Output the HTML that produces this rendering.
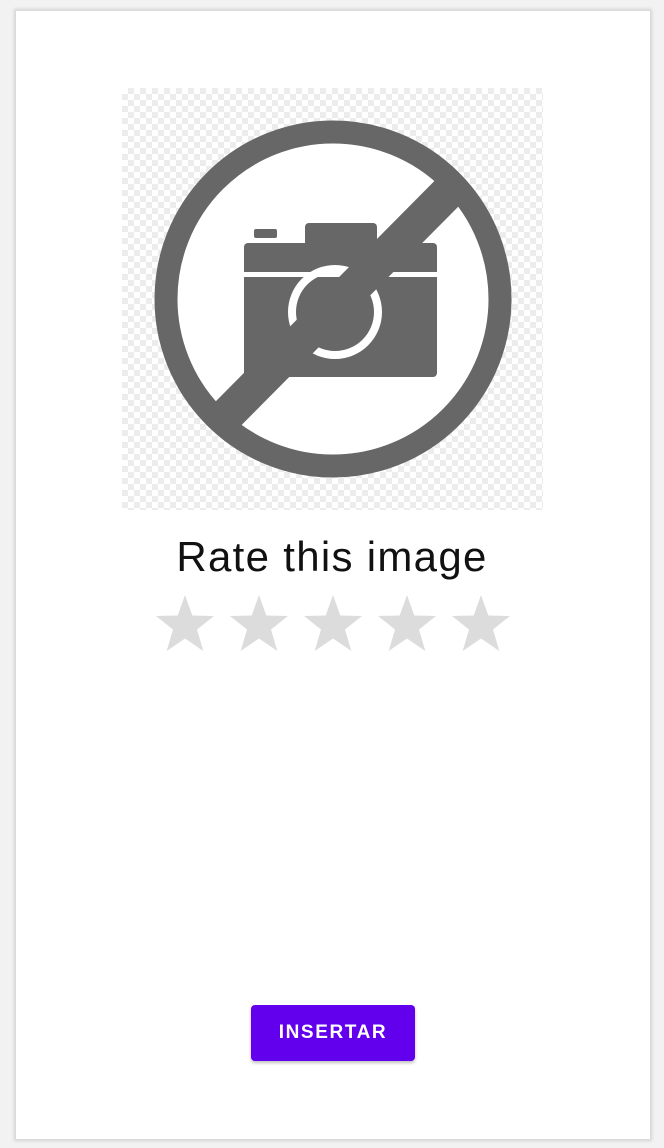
<!DOCTYPE html>
<html><head><meta charset="utf-8"><style>
html,body{margin:0;padding:0;background:#f2f2f2;width:664px;height:1148px;overflow:hidden;font-family:"Liberation Sans",sans-serif}
.card{position:absolute;left:16px;top:11px;width:634px;height:1128px;background:#fff;box-shadow:0 0 3px 2px #d4d4d4}
.img{position:absolute;left:122px;top:88px;width:421px;height:422px;
background-color:#fff;background-image:linear-gradient(45deg,#ececec 25%,transparent 25%,transparent 75%,#ececec 75%),linear-gradient(45deg,#ececec 25%,transparent 25%,transparent 75%,#ececec 75%);background-size:12px 12px;background-position:0 0,6px 6px}
.title{position:absolute;left:0;width:664px;top:533px;text-align:center;font-size:42px;letter-spacing:1.3px;color:#111}
.btn{position:absolute;left:251px;top:1005px;width:164px;height:56px;background:#6200ee;border-radius:4px;box-shadow:0 2px 3px rgba(0,0,0,.25);color:#fff;font-size:19px;font-weight:bold;letter-spacing:1.6px;text-align:center;line-height:56px}
</style></head><body>
<div class="card"></div>
<div class="img"></div>
<svg style="position:absolute;left:0;top:0" width="664" height="1148">
<defs><clipPath id="c"><circle cx="333" cy="299" r="156"/></clipPath></defs>
<circle cx="333" cy="299" r="167" fill="#fff" stroke="#676767" stroke-width="23"/>
<g clip-path="url(#c)">
<rect x="244" y="243" width="193" height="134" rx="4" fill="#676767"/>
<rect x="305" y="223" width="72" height="26" rx="4" fill="#676767"/>
<rect x="254" y="229" width="23" height="9" rx="2" fill="#676767"/>
<rect x="244" y="272" width="193" height="5" fill="#fff"/>
<circle cx="335" cy="312" r="43" fill="none" stroke="#fff" stroke-width="8"/>
<line x1="470" y1="170" x2="205" y2="437" stroke="#676767" stroke-width="35"/>
</g>
<g fill="#dcdcdc">
<path id="s" d="M185 595 L192.3 615.5 L214 616 L197 629.5 L203.3 651 L185 638.5 L166.7 651 L173 629.5 L156 616 L177.7 615.5Z"/>
<use href="#s" x="74"/><use href="#s" x="148"/><use href="#s" x="222"/><use href="#s" x="296"/>
</g>
</svg>
<div class="title">Rate this image</div>
<div class="btn">INSERTAR</div>
</body></html>
